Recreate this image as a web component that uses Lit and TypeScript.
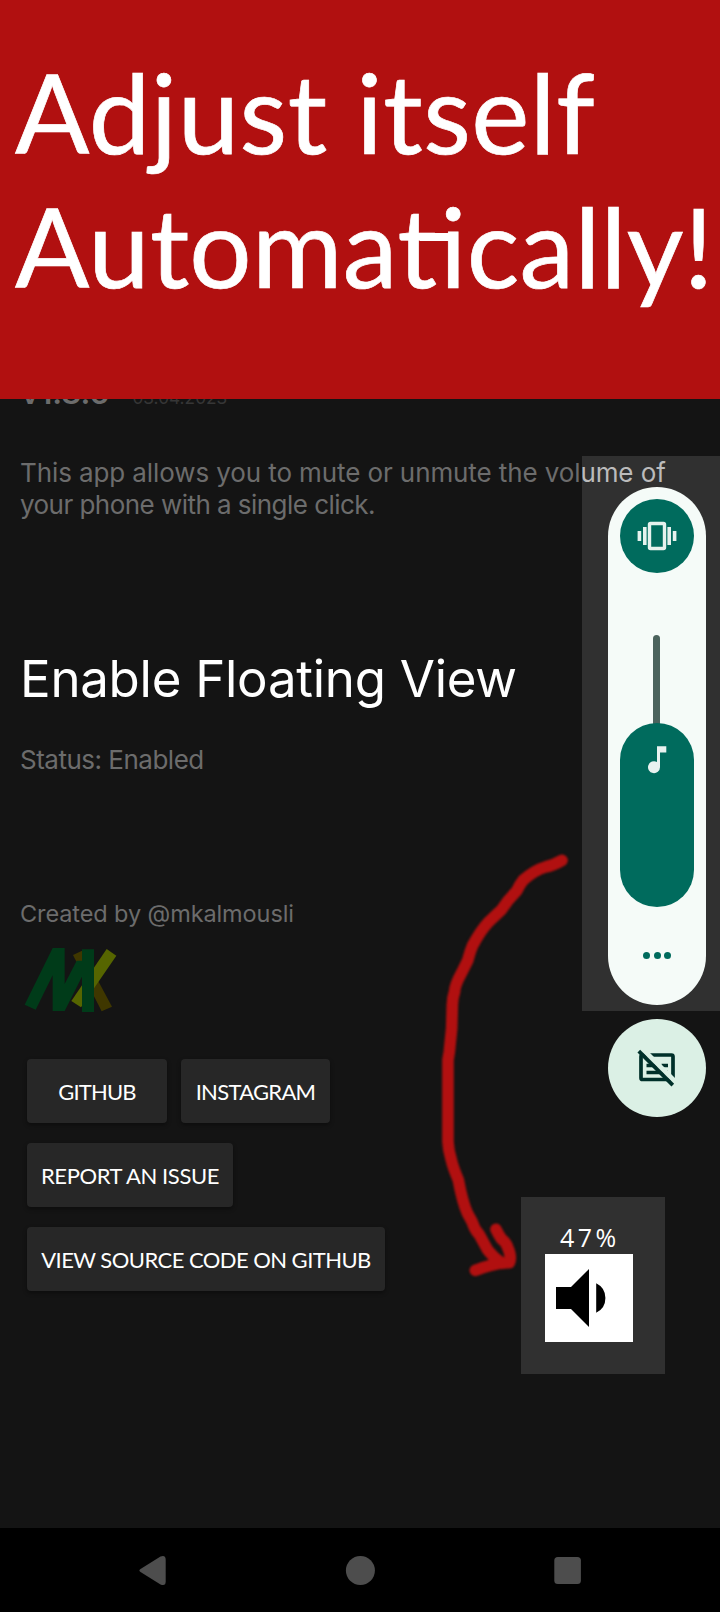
import { LitElement, html, css, svg } from "lit";
import { customElement, property } from "lit/decorators.js";

@customElement("volume-panel")
class VolumePanel extends LitElement {
  static styles = css`
    :host { display: block; }
    .scrim { height: 555px; padding: 31px 14px 6px 26px; box-sizing: border-box; }
    .pill {
      height: 518px; width: 98px; box-sizing: border-box; border-radius: 49px;
      background: #f5fbf8; padding: 12px; display: flex; flex-direction: column; align-items: center;
    }
    .ringer {
      width: 74px; height: 74px; border-radius: 50%; background: #006b5d; flex: none;
      display: grid; place-items: center;
    }
    .track { width: 7px; height: 100px; margin: 62px 1px -12px 0; border-radius: 4px; background: #4b635d; flex: none; }
    .level {
      width: 74px; height: 184px; border-radius: 37px; background: #006b5d; flex: none;
      display: flex; justify-content: center; padding-top: 23px; box-sizing: border-box;
    }
    .more { display: flex; gap: 3.5px; margin-top: 45px; }
    .more i { width: 7px; height: 7px; border-radius: 50%; background: #006b5d; }
    .captions {
      width: 98px; height: 98px; margin: 8px 0 0 26px; border-radius: 50%; background: #dbf0e5;
      display: grid; place-items: center;
    }
    svg { display: block; }
  `;
  render() {
    return html`
      <div class="scrim">
        <div class="pill">
          <div class="ringer">
            <svg width="40" height="30" viewBox="0 0 40 30">
              <rect x="12.5" y="2.5" width="15" height="25" rx="1" fill="none" stroke="#e6f2ee" stroke-width="3.4" />
              <path fill="#e6f2ee" d="M.6 10h3.6v10H.6zM6 6h3.6v18H6zM30.4 6H34v18h-3.6zM35.8 10h3.6v10h-3.6z" />
            </svg>
          </div>
          <div class="track"></div>
          <div class="level">
            <svg width="20" height="28" viewBox="0 0 20 28">
              <path fill="#e9f2f0" d="M10 .3h9.3v6.2H13v14.7a6 6 0 1 1-3-5.2z" />
            </svg>
          </div>
          <div class="more"><i></i><i></i><i></i></div>
        </div>
      </div>
      <div class="captions">
        <svg width="42" height="42" viewBox="0 0 42 42">
          <g stroke="#00302a" fill="none">
            <rect x="5" y="8" width="32" height="24.5" rx="1.5" stroke-width="3.7" />
            <path stroke-width="3.4" d="M10.500 18.500H32M10.500 25.500H32" stroke-dasharray="13 2 8" />
          </g>
          <path stroke="#dbf0e5" stroke-width="5" d="M5.5 1l35 35" />
          <path stroke="#00302a" stroke-width="3.8" d="M2.8 4.200l34 34" />
        </svg>
      </div>
    `;
  }
}

@customElement("floating-view")
class FloatingView extends LitElement {
  @property({ type: Number }) level = 47;
  static styles = css`
    :host {
      display: block; box-sizing: border-box; width: 144px; height: 177px;
      background: #303030; padding: 28px 24px 32px;
    }
    .percent {
      font: 500 25px/25px "Open Sans", "Noto Sans", sans-serif; color: #fff; padding-left: 15px;
      letter-spacing: 3.4px; white-space: nowrap; margin-bottom: 4px;
    }
    .icon { background: #fff; width: 88px; height: 88px; }
    svg { display: block; }
  `;
  render() {
    return html`
      <div class="percent">${this.level}%</div>
      <div class="icon">
        <svg width="88" height="88" viewBox="0 0 88 88">
          <path d="M11 33h15l18-18v58L26 55H11zM51.2 29.2a16.5 16.5 0 0 1 0 29.6z" />
        </svg>
      </div>
    `;
  }
}

const stroke = svg`
  <path d="M426 61Q400 76 376 81Q345 90 310 120Q300 132 290 153Q263 180 244 210Q218 234 204 248Q182 272 158 316Q151 332 143 362L126 396Q104 436 104 454Q97 475 97 495L95 565L88 635L84 660V905Q85 930 94 960Q100 985 115 1020Q127 1085 142 1119L157 1147Q164 1170 178 1184L203 1230Q220 1252 246 1270"/>
  <path d="M166 1291Q185 1283 212 1276Q240 1268 268 1268Q276 1252 263 1222Q260 1209 244 1196Q234 1181 228 1168"/>`;

@customElement("app-root")
class AppRoot extends LitElement {
  static styles = css`
    :host {
      display: flex; flex-direction: column; position: relative; width: 720px; height: 1612px;
      background: #141414; overflow: hidden; font-family: "Inter", sans-serif;
    }
    .banner {
      height: 399px; flex: none; box-sizing: border-box; padding: 44px 0 0 15px; background: #b11010;
      color: #fff; font: 110px/134px "Lato", sans-serif; position: relative; z-index: 2; white-space: nowrap;
      -webkit-text-stroke: 0.7px #fff;
    }
    .line { display: block; }
    .first { letter-spacing: 0.5px; }
    .second { letter-spacing: 0.25px; }
    .ti { position: relative; }
    .t { letter-spacing: 3px; }
    .ti::after {
      content: ""; position: absolute; left: 22px; right: 9px; top: 54px; height: 8px; background: #fff;
    }
    .page { flex: 1; display: flex; flex-direction: column; align-items: flex-start; margin-top: -21px; padding-left: 20px; color: #6c6c6c; }
    .page > * { position: relative; z-index: 1; white-space: nowrap; }
    .version { height: 30px; padding-left: 1px; display: flex; align-items: baseline; gap: 23px; font-size: 31px; line-height: 30px; font-weight: 600; }
    .date { font-size: 17.3px; font-weight: 400; color: #363636; }
    .about { margin: 49px 0 0; font-size: 26px; line-height: 32px; letter-spacing: -0.1px; }
    .about-end { letter-spacing: -0.54px; }
    .lit { color: #bbb; }
    h1 { margin: 128px 0 0; font-size: 51px; line-height: 60px; font-weight: 400; color: #fff; letter-spacing: -0.27px; }
    .status { margin-top: 35px; font-size: 26px; line-height: 32px; letter-spacing: -0.5px; }
    .author { margin-top: 123px; font-size: 23.5px; line-height: 30px; letter-spacing: -0.1px; }
    .logo { display: block; margin: 18px 0 0 4px; }
    .links { display: flex; flex-direction: column; gap: 20px; margin: 46px 0 0 7px; }
    .row { display: flex; gap: 14px; }
    button {
      height: 64px; border: 0; border-radius: 4px; background: #272727; color: #fff; padding: 1px 0 0;
      font: 22px/26px "Lato", sans-serif; box-shadow: 0 2px 4px rgba(0, 0, 0, 0.4); text-align: center;
      white-space: nowrap;
    }
    .github { width: 140px; letter-spacing: -0.85px; }
    .instagram { width: 149px; letter-spacing: -0.7px; }
    .report { width: 206px; letter-spacing: -0.4px; }
    .source { width: 358px; letter-spacing: -0.55px; }
    .panel { position: absolute; left: 582px; top: 456px; width: 138px; }
    .panel-back { position: absolute; left: 582px; top: 456px; width: 138px; height: 555px; background: #303030; }
    .panel { z-index: 1; }
    .floating { position: absolute; left: 521px; top: 1197px; }
    .arrow { position: absolute; left: 420px; top: 840px; filter: blur(0.9px); }
    .nav { height: 84px; flex: none; background: #000; }
    .nav svg { display: block; }
  `;
  render() {
    return html`
      <header class="banner">
        <span class="line first">Adjust itself</span>
        <span class="line second">Automa<span class="ti"><span class="t">t</span>i</span>cally!</span>
      </header>
      <div class="panel-back"></div>
      <main class="page">
        <div class="version"><span>v1.8.6</span><span class="date">03.04.2023</span></div>
        <p class="about">This app allows you to mute or unmute the vol<span class="lit">ume of</span><br /><span class="about-end">your phone with a single click.</span></p>
        <h1>Enable Floating View</h1>
        <div class="status">Status: Enabled</div>
        <div class="author">Created by @mkalmousli</div>
        <svg class="logo" width="94" height="66" viewBox="72 171 282 198">
          <path fill="#3f3700" d="M219 195l27-13 90 168-31 14z" />
          <path fill="#566500" d="M320 177l29 20-106 155-29-19z" />
          <path fill="#003b19" d="M158 174h36v108l36-70 20 0v40l-56 111h-36V256l-51 103-33-15zM246 178h36v188h-36z" />
        </svg>
        <div class="links">
          <div class="row"><button class="github">GITHUB</button><button class="instagram">INSTAGRAM</button></div>
          <div class="row"><button class="report">REPORT AN ISSUE</button></div>
          <div class="row"><button class="source">VIEW SOURCE CODE ON GITHUB</button></div>
        </div>
      </main>
      <volume-panel class="panel"></volume-panel>
      <floating-view class="floating"></floating-view>
      <svg class="arrow" width="160" height="450" viewBox="0 0 480 1350" fill="none" stroke="#b11010" stroke-width="35" stroke-linecap="round" stroke-linejoin="round">${stroke}</svg>
      <nav class="nav">
        <svg width="720" height="84" fill="#4d4d4d">
          <path d="M140.500 41Q138.300 42.500 140.500 44L160.500 56.500Q165.700 58.500 165.700 53.500V32Q165.700 26.500 160.500 28.500z" />
          <circle cx="360.400" cy="42.500" r="14.500" />
          <rect x="554.300" y="29" width="26.600" height="27" rx="3.500" />
        </svg>
      </nav>
    `;
  }
}
